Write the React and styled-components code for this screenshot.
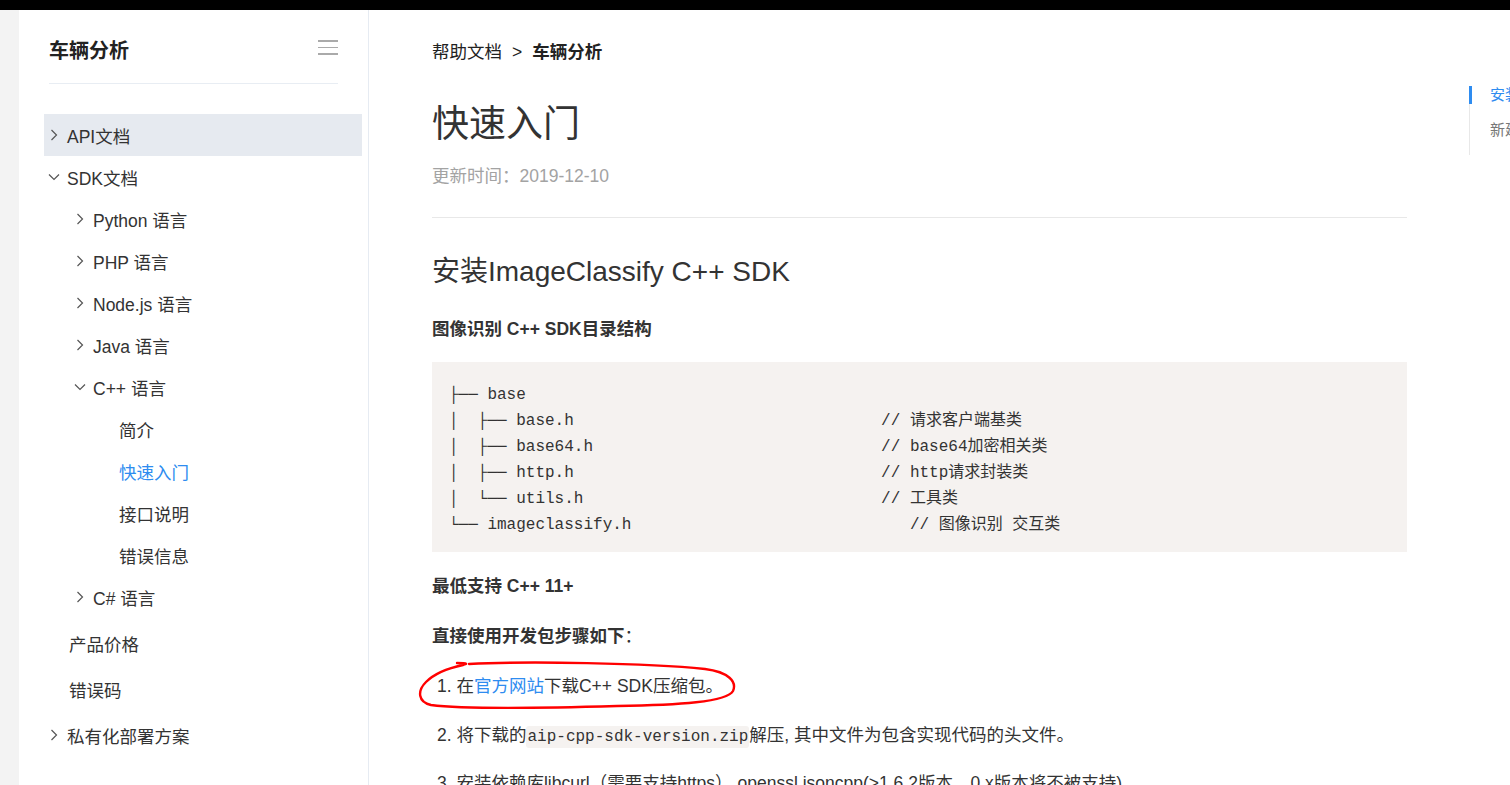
import React from 'react'
import styled, { createGlobalStyle } from 'styled-components'

const GlobalStyle = createGlobalStyle`
  html, body {
    margin: 0;
    padding: 0;
    height: 100%;
    overflow: hidden;
    background: #fff;
  }
  body {
    font-family: "Liberation Sans", "Noto Sans CJK SC", sans-serif;
    color: #333;
  }
`

const Page = styled.div`
  width: 1510px;
  height: 785px;
  display: flex;
  flex-direction: column;
  overflow: hidden;
`

const TopBar = styled.div`
  height: 10px;
  background: #000;
  flex-shrink: 0;
`

const Body = styled.div`
  flex: 1;
  display: flex;
  min-height: 0;
`

const Gutter = styled.div`
  width: 19px;
  background: #f3f3f3;
  flex-shrink: 0;
`

const Sidebar = styled.aside`
  width: 349px;
  flex-shrink: 0;
  border-right: 1px solid #e6ebf2;
  background: #fff;
`

const SideHeader = styled.div`
  margin: 0 30px;
  height: 74px;
  display: flex;
  align-items: center;
  justify-content: space-between;
  border-bottom: 1px solid #e8edf3;
  box-sizing: border-box;
  padding-top: 6px;
`

const SideTitle = styled.div`
  font-size: 20px;
  font-weight: 700;
  color: #222;
`

const Burger = styled.div`
  width: 20px;
  display: flex;
  flex-direction: column;
  gap: 5px;
  margin-bottom: 4px;
  span {
    height: 1.5px;
    background: #aaa;
  }
`

const Menu = styled.nav`
  margin: 30px 6px 0 25px;
  display: flex;
  flex-direction: column;
`

const Row = styled.div`
  height: 42px;
  display: flex;
  align-items: center;
  gap: 6px;
  padding-left: ${p => p.$indent}px;
  margin-top: ${p => (p.$spaced ? 4 : 0)}px;
  background: ${p => (p.$hover ? '#e6eaf0' : 'transparent')};
  color: ${p => (p.$active ? '#2e8cf0' : '#333')};
  font-size: 17.5px;
  white-space: nowrap;
`

const ArrowSlot = styled.span`
  width: 14px;
  display: flex;
  align-items: center;
  justify-content: center;
`

const Main = styled.main`
  width: 975px;
  margin-left: 63px;
  flex-shrink: 0;
  padding-top: 28px;
`

const Crumbs = styled.div`
  font-size: 17.5px;
  line-height: 28px;
  color: #222;
  display: flex;
  gap: 10px;
  b {
    font-weight: 700;
  }
`

const Title = styled.h1`
  margin: 34px 0 0;
  font-size: 37px;
  line-height: 50px;
  font-weight: 400;
  color: #333;
`

const Updated = styled.div`
  margin-top: 12px;
  font-size: 17.5px;
  line-height: 28px;
  color: #a3a3a3;
`

const Rule = styled.hr`
  margin: 27px 0 0;
  border: none;
  border-top: 1px solid #e8e8e8;
`

const SectionTitle = styled.h2`
  margin: 34px 0 0;
  font-size: 28px;
  line-height: 40px;
  font-weight: 400;
  color: #333;
`

const Strong = styled.p`
  margin: ${p => p.$top}px 0 0;
  font-size: 17.5px;
  line-height: 28px;
  font-weight: 700;
  color: #333;
  span {
    font-weight: 400;
  }
`

const CodeBlock = styled.pre`
  margin: 19px 0 0;
  padding: 20px 17px 14px;
  background: #f5f2f0;
  font-family: "Liberation Mono", "DejaVu Sans Mono", "Noto Sans CJK SC", monospace;
  font-size: 16px;
  line-height: 26px;
  color: #333;
  overflow: hidden;
`

const Step = styled.p`
  position: relative;
  margin: ${p => p.$top}px 0 0;
  padding-left: 5px;
  font-size: 17.5px;
  line-height: 28px;
  color: #333;
  white-space: nowrap;
  a {
    color: #2e8cf0;
    text-decoration: none;
  }
`

const InlineCode = styled.code`
  font-family: "Liberation Mono", "DejaVu Sans Mono", monospace;
  font-size: 16px;
  background: #f5f2f0;
  border-radius: 3px;
  padding: 2px 1px;
`

const Scribble = styled.svg`
  position: absolute;
  left: -15px;
  top: -12px;
  overflow: visible;
  pointer-events: none;
`

const Toc = styled.div`
  margin-left: 62px;
  margin-top: 76px;
  align-self: flex-start;
  border-left: 1px solid #e8e8e8;
  padding-bottom: 16px;
  white-space: nowrap;
`

const TocItem = styled.div`
  position: relative;
  padding-left: 20px;
  font-size: 15px;
  line-height: 18px;
  margin-bottom: ${p => (p.$last ? 0 : 17)}px;
  color: ${p => (p.$active ? '#2e8cf0' : '#777')};
  &::before {
    content: '';
    display: ${p => (p.$active ? 'block' : 'none')};
    position: absolute;
    left: -1px;
    top: 0;
    width: 3px;
    height: 18px;
    background: #2e8cf0;
  }
`

const Chevron = ({ open }) =>
  open ? (
    <svg width="12" height="8" viewBox="0 0 12 8">
      <polyline points="1,1.5 6,6.5 11,1.5" fill="none" stroke="#555" strokeWidth="1.2" />
    </svg>
  ) : (
    <svg width="8" height="12" viewBox="0 0 8 12">
      <polyline points="1.5,1 6.5,6 1.5,11" fill="none" stroke="#555" strokeWidth="1.2" />
    </svg>
  )

const menu = [
  { label: 'API文档', indent: 3, arrow: 'right', hover: true },
  { label: 'SDK文档', indent: 3, arrow: 'down' },
  { label: 'Python 语言', indent: 29, arrow: 'right' },
  { label: 'PHP 语言', indent: 29, arrow: 'right' },
  { label: 'Node.js 语言', indent: 29, arrow: 'right' },
  { label: 'Java 语言', indent: 29, arrow: 'right' },
  { label: 'C++ 语言', indent: 29, arrow: 'down' },
  { label: '简介', indent: 75 },
  { label: '快速入门', indent: 75, active: true },
  { label: '接口说明', indent: 75 },
  { label: '错误信息', indent: 75 },
  { label: 'C# 语言', indent: 29, arrow: 'right' },
  { label: '产品价格', indent: 25, spaced: true },
  { label: '错误码', indent: 25, spaced: true },
  { label: '私有化部署方案', indent: 3, arrow: 'right', spaced: true },
]

const tree = [
  ['├── base', '', 0],
  ['│  ├── base.h', '// 请求客户端基类', 45],
  ['│  ├── base64.h', '// base64加密相关类', 45],
  ['│  ├── http.h', '// http请求封装类', 45],
  ['│  └── utils.h', '// 工具类', 45],
  ['└── imageclassify.h', '// 图像识别 交互类', 48],
]
  .map(([left, comment, col]) => (comment ? left.padEnd(col, ' ') + comment : left))
  .join('\n')

const App = () => {
  return (
    <Page>
      <GlobalStyle />
      <TopBar />
      <Body>
        <Gutter />
        <Sidebar>
          <SideHeader>
            <SideTitle>车辆分析</SideTitle>
            <Burger>
              <span />
              <span />
              <span />
            </Burger>
          </SideHeader>
          <Menu>
            {menu.map(item => (
              <Row
                key={item.label}
                $indent={item.indent}
                $hover={item.hover}
                $active={item.active}
                $spaced={item.spaced}
              >
                {item.arrow && (
                  <ArrowSlot>
                    <Chevron open={item.arrow === 'down'} />
                  </ArrowSlot>
                )}
                {item.label}
              </Row>
            ))}
          </Menu>
        </Sidebar>

        <Main>
          <Crumbs>
            <span>帮助文档</span>
            <span>&gt;</span>
            <b>车辆分析</b>
          </Crumbs>
          <Title>快速入门</Title>
          <Updated>更新时间：2019-12-10</Updated>
          <Rule />
          <SectionTitle>安装ImageClassify C++ SDK</SectionTitle>
          <Strong $top={23}>图像识别 C++ SDK目录结构</Strong>
          <CodeBlock>{tree}</CodeBlock>
          <Strong $top={20}>最低支持 C++ 11+</Strong>
          <Strong $top={22}>
            直接使用开发包步骤如下<span>：</span>
          </Strong>
          <Step $top={22}>
            1. 在<a href="#">官方网站</a>下载C++ SDK压缩包。
            <Scribble width="320" height="50" viewBox="0 0 320 50">
              <path
                d="M52 4 C 110 1, 230 3, 288 9 C 312 12, 320 22, 316 31 C 310 42, 262 45, 200 46 C 130 48, 45 49, 14 45 C 1 42, 0 31, 9 22 C 19 12, 32 8, 46 5 C 50 4, 52 3, 40 3"
                fill="none"
                stroke="#f00"
                strokeWidth="2.4"
                strokeLinecap="round"
              />
            </Scribble>
          </Step>
          <Step $top={21}>
            2. 将下载的<InlineCode>aip-cpp-sdk-version.zip</InlineCode>解压, 其中文件为包含实现代码的头文件。
          </Step>
          <Step $top={18}>
            3. 安装依赖库libcurl（需要支持https） openssl jsoncpp(&gt;1.6.2版本，0.x版本将不被支持)
          </Step>
        </Main>

        <Toc>
          <TocItem $active>安装ImageClassify C++ SDK</TocItem>
          <TocItem $last>新建AipImageClassify</TocItem>
        </Toc>
      </Body>
    </Page>
  )
}

export default App
